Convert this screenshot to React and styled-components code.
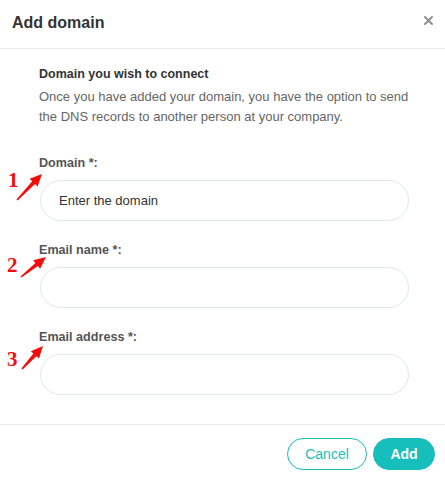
import React from 'react';
import styled, { createGlobalStyle } from 'styled-components';

const GlobalStyle = createGlobalStyle`
  html, body {
    margin: 0;
    padding: 0;
    background: #fff;
  }
  body {
    font-family: "Liberation Sans", Arial, sans-serif;
  }
  * {
    box-sizing: border-box;
  }
`;

const TEAL = '#17bfbc';

const fields = [
  { label: 'Domain *:', placeholder: 'Enter the domain', mark: '1', markX: 8, markY: 170 },
  { label: 'Email name *:', placeholder: '', mark: '2', markX: 7, markY: 255 },
  { label: 'Email address *:', placeholder: '', mark: '3', markX: 7, markY: 349 },
];

// tail -> head of each red arrow, in page pixels
const arrows = [
  { x1: 17, y1: 200, x2: 42, y2: 174 },
  { x1: 21, y1: 277, x2: 46, y2: 257 },
  { x1: 22, y1: 369, x2: 43, y2: 346 },
];

function arrowPoints({ x1, y1, x2, y2 }) {
  const dx = x2 - x1;
  const dy = y2 - y1;
  const len = Math.sqrt(dx * dx + dy * dy);
  const ux = dx / len;
  const uy = dy / len;
  const nx = -uy;
  const ny = ux;
  const head = 12;
  const bx = x2 - ux * head;
  const by = y2 - uy * head;
  const p = (x, y) => `${x.toFixed(1)},${y.toFixed(1)}`;
  return [
    p(x1 + nx * 0.8, y1 + ny * 0.8),
    p(bx + nx * 2, by + ny * 2),
    p(bx + nx * 5.5, by + ny * 5.5),
    p(x2, y2),
    p(bx - nx * 5.5, by - ny * 5.5),
    p(bx - nx * 2, by - ny * 2),
    p(x1 - nx * 0.8, y1 - ny * 0.8),
  ].join(' ');
}

export default function App() {
  return (
    <>
      <GlobalStyle />
      <Modal>
        <Header>
          <Title>Add domain</Title>
          <CloseButton aria-label="Close">
            <svg width="9" height="9" viewBox="0 0 9 9">
              <path d="M1 1 L8 8 M8 1 L1 8" stroke="#8a8a8a" strokeWidth="1.8" strokeLinecap="round" />
            </svg>
          </CloseButton>
        </Header>

        <Body>
          <Heading>Domain you wish to connect</Heading>
          <Description>
            Once you have added your domain, you have the option to send the DNS records to another person at your company.
          </Description>

          {fields.map((f, i) => (
            <Field key={f.label} $first={i === 0}>
              <Label>{f.label}</Label>
              <Input placeholder={f.placeholder} />
            </Field>
          ))}
        </Body>

        <Footer>
          <Button $outline>Cancel</Button>
          <Button>Add</Button>
        </Footer>

        {fields.map((f) => (
          <Mark key={f.mark} style={{ left: f.markX, top: f.markY }}>
            {f.mark}
          </Mark>
        ))}
        <Overlay width="445" height="487" viewBox="0 0 445 487">
          {arrows.map((a, i) => (
            <polygon key={i} points={arrowPoints(a)} fill="#f20d0d" />
          ))}
        </Overlay>
      </Modal>
    </>
  );
}

const Modal = styled.div`
  position: relative;
  width: 445px;
  height: 487px;
  display: flex;
  flex-direction: column;
  background: #fff;
  overflow: hidden;
`;

const Header = styled.div`
  height: 49px;
  flex: none;
  display: flex;
  align-items: center;
  justify-content: space-between;
  padding: 0 12px 2px 12px;
  border-bottom: 1px solid #e7eaee;
`;

const Title = styled.h2`
  margin: 0;
  font-size: 16px;
  font-weight: 700;
  color: #333;
`;

const CloseButton = styled.button`
  border: none;
  background: none;
  padding: 0;
  margin: 0 0 5px 0;
  display: flex;
  cursor: pointer;
`;

const Body = styled.div`
  flex: 1;
  padding: 15px 37px 0 39px;
`;

const Heading = styled.div`
  font-size: 12.5px;
  line-height: 20px;
  font-weight: 700;
  color: #333;
`;

const Description = styled.p`
  margin: 3px -10px 0 0;
  font-size: 13px;
  line-height: 20px;
  color: #666;
`;

const Field = styled.div`
  display: flex;
  flex-direction: column;
  gap: 7px;
  margin-top: ${(p) => (p.$first ? '26px' : '19px')};
`;

const Label = styled.label`
  font-size: 12.6px;
  line-height: 20px;
  font-weight: 700;
  color: #555;
`;

const Input = styled.input`
  width: 369px;
  height: 41px;
  margin-left: 1px;
  border: 1px solid #dde9e7;
  border-radius: 21px;
  padding: 0 18px;
  font-family: "Liberation Sans", Arial, sans-serif;
  font-size: 13px;
  color: #333;
  outline: none;

  &::placeholder {
    color: #333;
  }
`;

const Footer = styled.div`
  height: 63px;
  flex: none;
  display: flex;
  justify-content: flex-end;
  align-items: flex-start;
  gap: 6px;
  padding: 13px 10px 0 0;
  border-top: 1px solid #e7eaee;
`;

const Button = styled.button`
  height: 32px;
  width: ${(p) => (p.$outline ? '80px' : '62px')};
  padding: 0;
  border-radius: 16px;
  border: 1px solid ${TEAL};
  background: ${(p) => (p.$outline ? '#fff' : TEAL)};
  color: ${(p) => (p.$outline ? TEAL : '#fff')};
  font-family: "Liberation Sans", Arial, sans-serif;
  font-size: 14px;
  font-weight: ${(p) => (p.$outline ? 400 : 700)};
  cursor: pointer;
`;

const Mark = styled.span`
  position: absolute;
  font-family: "Liberation Serif", "Times New Roman", serif;
  font-weight: 700;
  font-size: 21px;
  line-height: 1;
  color: #f20d0d;
`;

const Overlay = styled.svg`
  position: absolute;
  left: 0;
  top: 0;
  pointer-events: none;
`;
